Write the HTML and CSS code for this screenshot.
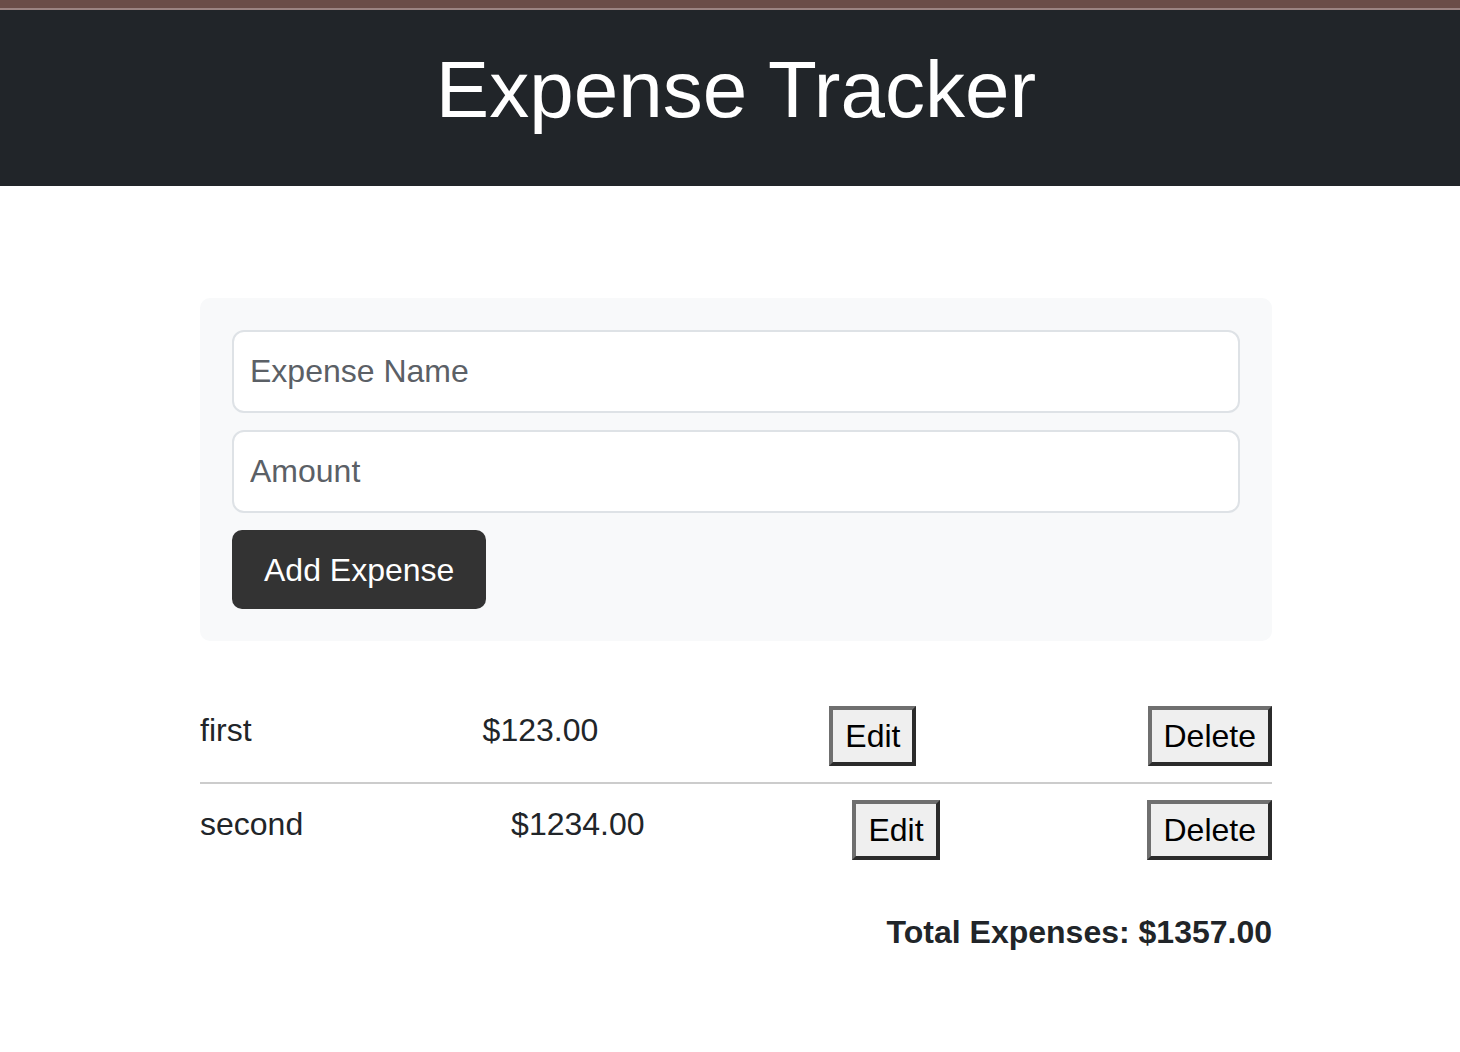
FILE: index.html
```html
<!DOCTYPE html>
<html lang="en">
<head>
<meta charset="utf-8">
<title>Expense Tracker</title>
<link rel="stylesheet" href="styles.css">
</head>
<body>
<div class="topstrip"></div>
<header class="app-header">
  <h1 class="app-title">Expense Tracker</h1>
</header>
<main class="container">
  <form class="expense-form">
    <input class="field" type="text" placeholder="Expense Name">
    <input class="field" type="text" placeholder="Amount">
    <button class="add-btn" type="button">Add Expense</button>
  </form>
  <ul class="expense-list">
    <li class="expense-row">
      <span class="expense-name">first</span>
      <span class="expense-amount">$123.00</span>
      <button class="row-btn" type="button">Edit</button>
      <button class="row-btn" type="button">Delete</button>
    </li>
    <li class="expense-row">
      <span class="expense-name">second</span>
      <span class="expense-amount">$1234.00</span>
      <button class="row-btn" type="button">Edit</button>
      <button class="row-btn" type="button">Delete</button>
    </li>
  </ul>
  <div class="total">Total Expenses: $1357.00</div>
</main>
</body>
</html>
```

FILE: styles.css
```css
* { box-sizing: border-box; }

html, body {
  margin: 0;
  padding: 0;
  background: #ffffff;
}

body {
  font-family: "Liberation Sans", Arial, Helvetica, sans-serif;
  font-size: 32px;
  line-height: 1.5;
  color: #212529;
}

.topstrip {
  height: 10px;
  background: #6b4d48;
  border-bottom: 2px solid #9c8482;
}

.app-header {
  background: #212529;
  color: #ffffff;
  padding: 32px 0 32px 12px;
  text-align: center;
}

.app-title {
  margin: 0 0 16px;
  font-size: 80px;
  line-height: 1.2;
  font-weight: 400;
}

.container {
  width: 1072px;
  margin: 112px 0 0 200px;
}

.expense-form {
  background: #f8f9fa;
  border-radius: 10px;
  padding: 32px;
  display: flex;
  flex-direction: column;
  align-items: flex-start;
}

.field {
  display: block;
  width: 100%;
  height: 83px;
  margin: 0 0 17px;
  padding: 0 16px;
  border: 2px solid #dee2e6;
  border-radius: 12px;
  background: #ffffff;
  font-family: inherit;
  font-size: 32px;
  line-height: 1.5;
  color: #212529;
}

.field::placeholder {
  color: #5b6066;
  opacity: 1;
}

.add-btn {
  height: 79px;
  padding: 0 32px;
  border: 0;
  border-radius: 10px;
  background: #333333;
  color: #ffffff;
  font-family: inherit;
  font-size: 32px;
  line-height: 1.5;
}

.expense-list {
  list-style: none;
  margin: 49px 0 0;
  padding: 0;
}

.expense-row {
  display: flex;
  justify-content: space-between;
  padding: 16px 0;
  border-bottom: 2px solid #cccccc;
}

.expense-row:last-child {
  border-bottom: 0;
}

.row-btn {
  font-family: inherit;
  font-size: 32px;
  line-height: 1.5;
  padding: 2px 12px;
  margin: 0;
  color: #000000;
  background: #efefef;
  border: 4px solid;
  border-color: #6f6f6f #2b2b2b #2b2b2b #6f6f6f;
  border-width: 4px;
  border-radius: 0;
}

.total {
  margin-top: 32px;
  text-align: right;
  font-weight: 700;
}
```
